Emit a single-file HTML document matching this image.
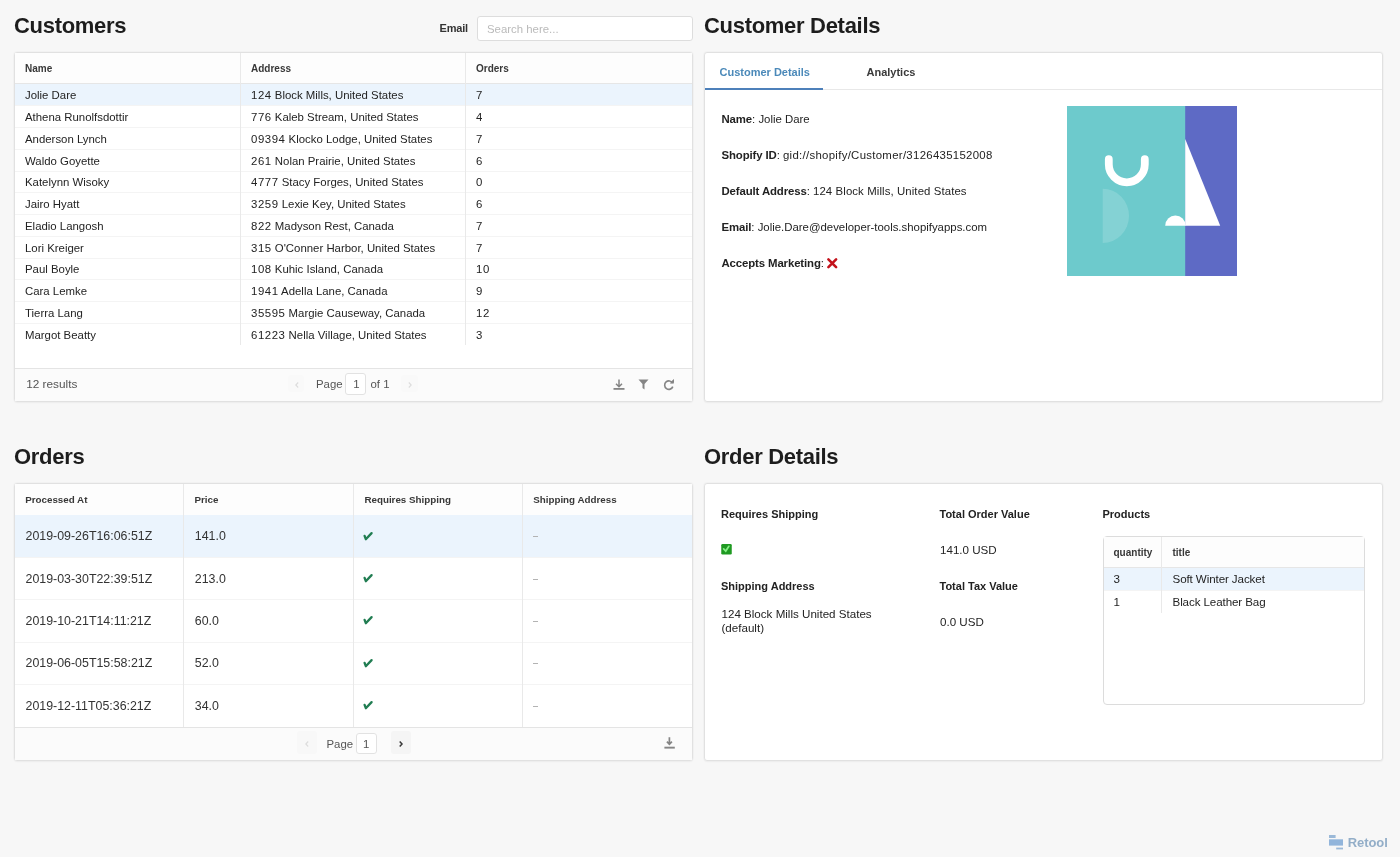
<!DOCTYPE html>
<html><head><meta charset="utf-8"><style>
*{box-sizing:border-box;margin:0;padding:0}
html,body{width:1400px;height:857px;overflow:hidden;background:#f7f7f7;font-family:"Liberation Sans",sans-serif;color:#333}
.t{position:absolute;white-space:nowrap;line-height:14px}
.r{position:absolute}
.title{position:absolute;font-size:22px;font-weight:bold;color:#1d1d1d;letter-spacing:-0.3px;line-height:28px;white-space:nowrap}
svg{position:absolute;overflow:visible}
</style></head><body>
<div id="w" style="position:absolute;left:0;top:0;width:1400px;height:857px;will-change:transform">
<div class="title" style="left:14px;top:12px">Customers</div>
<div class="t" style="left:439.5px;top:20.8px;font-size:11px;font-weight:bold;color:#333;letter-spacing:-0.2px">Email</div>
<div class="r" style="left:477px;top:16px;width:216px;height:25px;background:#fff;border:1px solid #dddddd;border-radius:3px"></div>
<div class="t" style="left:487px;top:22px;font-size:11.4px;color:#bababa;">Search here...</div>
<div class="r" style="left:14px;top:52px;width:679px;height:350px;background:#fff;border:1px solid #e1e1e1;border-radius:3px;box-shadow:0 0 0 1px rgba(0,0,0,0.018),0 1px 2px rgba(0,0,0,0.03)"></div>
<div class="r" style="left:15px;top:53px;width:677px;height:31px;background:#fdfdfd"></div>
<div class="r" style="left:15px;top:83px;width:677px;height:1px;background:#e6e6e6"></div>
<div class="t" style="left:25px;top:62px;font-size:10px;font-weight:bold;color:#383838;">Name</div>
<div class="t" style="left:251px;top:62px;font-size:10px;font-weight:bold;color:#383838;">Address</div>
<div class="t" style="left:476px;top:62px;font-size:10px;font-weight:bold;color:#383838;">Orders</div>
<div class="r" style="left:15px;top:84.0px;width:677px;height:21.75px;background:#ebf4fd"></div>
<div class="r" style="left:15px;top:105.25px;width:677px;height:1px;background:#f4f4f4"></div>
<div class="t" style="left:25px;top:88.28px;font-size:11.4px;color:#232323;">Jolie Dare</div>
<div class="t" style="left:251px;top:88.28px;font-size:11.4px;color:#232323;"><span style="letter-spacing:0.55px">124</span> Block Mills, United States</div>
<div class="t" style="left:476px;top:88.28px;font-size:11.4px;color:#232323;"><span style="letter-spacing:0.55px">7</span></div>
<div class="r" style="left:15px;top:127.0px;width:677px;height:1px;background:#f4f4f4"></div>
<div class="t" style="left:25px;top:110.03px;font-size:11.4px;color:#232323;">Athena Runolfsdottir</div>
<div class="t" style="left:251px;top:110.03px;font-size:11.4px;color:#232323;"><span style="letter-spacing:0.55px">776</span> Kaleb Stream, United States</div>
<div class="t" style="left:476px;top:110.03px;font-size:11.4px;color:#232323;"><span style="letter-spacing:0.55px">4</span></div>
<div class="r" style="left:15px;top:148.75px;width:677px;height:1px;background:#f4f4f4"></div>
<div class="t" style="left:25px;top:131.78px;font-size:11.4px;color:#232323;">Anderson Lynch</div>
<div class="t" style="left:251px;top:131.78px;font-size:11.4px;color:#232323;"><span style="letter-spacing:0.55px">09394</span> Klocko Lodge, United States</div>
<div class="t" style="left:476px;top:131.78px;font-size:11.4px;color:#232323;"><span style="letter-spacing:0.55px">7</span></div>
<div class="r" style="left:15px;top:170.5px;width:677px;height:1px;background:#f4f4f4"></div>
<div class="t" style="left:25px;top:153.53px;font-size:11.4px;color:#232323;">Waldo Goyette</div>
<div class="t" style="left:251px;top:153.53px;font-size:11.4px;color:#232323;"><span style="letter-spacing:0.55px">261</span> Nolan Prairie, United States</div>
<div class="t" style="left:476px;top:153.53px;font-size:11.4px;color:#232323;"><span style="letter-spacing:0.55px">6</span></div>
<div class="r" style="left:15px;top:192.25px;width:677px;height:1px;background:#f4f4f4"></div>
<div class="t" style="left:25px;top:175.28px;font-size:11.4px;color:#232323;">Katelynn Wisoky</div>
<div class="t" style="left:251px;top:175.28px;font-size:11.4px;color:#232323;"><span style="letter-spacing:0.55px">4777</span> Stacy Forges, United States</div>
<div class="t" style="left:476px;top:175.28px;font-size:11.4px;color:#232323;"><span style="letter-spacing:0.55px">0</span></div>
<div class="r" style="left:15px;top:214.0px;width:677px;height:1px;background:#f4f4f4"></div>
<div class="t" style="left:25px;top:197.03px;font-size:11.4px;color:#232323;">Jairo Hyatt</div>
<div class="t" style="left:251px;top:197.03px;font-size:11.4px;color:#232323;"><span style="letter-spacing:0.55px">3259</span> Lexie Key, United States</div>
<div class="t" style="left:476px;top:197.03px;font-size:11.4px;color:#232323;"><span style="letter-spacing:0.55px">6</span></div>
<div class="r" style="left:15px;top:235.75px;width:677px;height:1px;background:#f4f4f4"></div>
<div class="t" style="left:25px;top:218.78px;font-size:11.4px;color:#232323;">Eladio Langosh</div>
<div class="t" style="left:251px;top:218.78px;font-size:11.4px;color:#232323;"><span style="letter-spacing:0.55px">822</span> Madyson Rest, Canada</div>
<div class="t" style="left:476px;top:218.78px;font-size:11.4px;color:#232323;"><span style="letter-spacing:0.55px">7</span></div>
<div class="r" style="left:15px;top:257.5px;width:677px;height:1px;background:#f4f4f4"></div>
<div class="t" style="left:25px;top:240.53px;font-size:11.4px;color:#232323;">Lori Kreiger</div>
<div class="t" style="left:251px;top:240.53px;font-size:11.4px;color:#232323;"><span style="letter-spacing:0.55px">315</span> O'Conner Harbor, United States</div>
<div class="t" style="left:476px;top:240.53px;font-size:11.4px;color:#232323;"><span style="letter-spacing:0.55px">7</span></div>
<div class="r" style="left:15px;top:279.25px;width:677px;height:1px;background:#f4f4f4"></div>
<div class="t" style="left:25px;top:262.27px;font-size:11.4px;color:#232323;">Paul Boyle</div>
<div class="t" style="left:251px;top:262.27px;font-size:11.4px;color:#232323;"><span style="letter-spacing:0.55px">108</span> Kuhic Island, Canada</div>
<div class="t" style="left:476px;top:262.27px;font-size:11.4px;color:#232323;"><span style="letter-spacing:0.55px">10</span></div>
<div class="r" style="left:15px;top:301.0px;width:677px;height:1px;background:#f4f4f4"></div>
<div class="t" style="left:25px;top:284.02px;font-size:11.4px;color:#232323;">Cara Lemke</div>
<div class="t" style="left:251px;top:284.02px;font-size:11.4px;color:#232323;"><span style="letter-spacing:0.55px">1941</span> Adella Lane, Canada</div>
<div class="t" style="left:476px;top:284.02px;font-size:11.4px;color:#232323;"><span style="letter-spacing:0.55px">9</span></div>
<div class="r" style="left:15px;top:322.75px;width:677px;height:1px;background:#f4f4f4"></div>
<div class="t" style="left:25px;top:305.77px;font-size:11.4px;color:#232323;">Tierra Lang</div>
<div class="t" style="left:251px;top:305.77px;font-size:11.4px;color:#232323;"><span style="letter-spacing:0.55px">35595</span> Margie Causeway, Canada</div>
<div class="t" style="left:476px;top:305.77px;font-size:11.4px;color:#232323;"><span style="letter-spacing:0.55px">12</span></div>
<div class="t" style="left:25px;top:327.52px;font-size:11.4px;color:#232323;">Margot Beatty</div>
<div class="t" style="left:251px;top:327.52px;font-size:11.4px;color:#232323;"><span style="letter-spacing:0.55px">61223</span> Nella Village, United States</div>
<div class="t" style="left:476px;top:327.52px;font-size:11.4px;color:#232323;"><span style="letter-spacing:0.55px">3</span></div>
<div class="r" style="left:240px;top:53px;width:1px;height:292.0px;background:#e9e9e9"></div>
<div class="r" style="left:465px;top:53px;width:1px;height:292.0px;background:#e9e9e9"></div>
<div class="r" style="left:15px;top:367.5px;width:677px;height:1px;background:#e4e4e4"></div>
<div class="r" style="left:15px;top:368.5px;width:677px;height:32.5px;background:#fbfbfb"></div>
<div class="t" style="left:26.2px;top:377px;font-size:11.8px;color:#555;">12 results</div>
<div class="r" style="left:288px;top:375px;width:16px;height:17px;background:#f9f9f9;border-radius:3px"></div>
<svg style="left:294.8px;top:382px" width="4" height="6" viewBox="0 0 4 6"><path d="M3.2 0.5L0.8 3L3.2 5.5" stroke="#dcdcdc" stroke-width="1.1" fill="none"/></svg>
<div class="t" style="left:316px;top:376.6px;font-size:11.4px;color:#555;">Page</div>
<div class="r" style="left:345px;top:373.3px;width:21px;height:22px;background:#fff;border:1px solid #e2e2e2;border-radius:3px"></div>
<div class="t" style="left:353.3px;top:376.6px;font-size:11.4px;color:#555;">1</div>
<div class="t" style="left:370.5px;top:376.6px;font-size:11.4px;color:#555;">of 1</div>
<div class="r" style="left:401px;top:375px;width:17px;height:17px;background:#f9f9f9;border-radius:3px"></div>
<svg style="left:408px;top:382px" width="4" height="6" viewBox="0 0 4 6"><path d="M0.8 0.5L3.2 3L0.8 5.5" stroke="#dcdcdc" stroke-width="1.1" fill="none"/></svg>
<svg style="left:613px;top:379px" width="12" height="11" viewBox="0 0 12 11"><path d="M6 0.5V7.5M3 4.8L6 7.8L9 4.8" stroke="#858585" stroke-width="1.5" fill="none"/><rect x="0.5" y="9" width="11" height="1.8" fill="#858585"/></svg>
<svg style="left:638px;top:379px" width="11" height="11" viewBox="0 0 11 11"><path d="M0.5 0.5H10.5L6.5 5V10.5L4.5 9V5Z" fill="#858585"/></svg>
<svg style="left:663px;top:379px" width="12" height="12" viewBox="0 0 12 12"><path d="M9.6 4.2A4.2 4.2 0 1 0 9.8 7.6" stroke="#858585" stroke-width="1.6" fill="none"/><path d="M7.2 3.6H11V0" fill="#858585"/><path d="M6.8 4.6L10.8 4.6L10.8 0.6Z" fill="#858585"/></svg>
<div class="title" style="left:704px;top:12px">Customer Details</div>
<div class="r" style="left:704px;top:52px;width:679px;height:350px;background:#fff;border:1px solid #e1e1e1;border-radius:3px;box-shadow:0 0 0 1px rgba(0,0,0,0.018),0 1px 2px rgba(0,0,0,0.03)"></div>
<div class="r" style="left:705px;top:88.8px;width:677px;height:1px;background:#e8e8e8"></div>
<div class="r" style="left:705px;top:87.8px;width:118px;height:2.2px;background:#4d80ba"></div>
<div class="t" style="left:719.5px;top:64.5px;font-size:11px;font-weight:bold;color:#4b89b9;">Customer Details</div>
<div class="t" style="left:866.5px;top:64.5px;font-size:11px;font-weight:bold;color:#3a3a3a;">Analytics</div>
<div class="t" style="left:721.5px;top:111.7px;font-size:11.4px;color:#232323;"><b style="color:#222;letter-spacing:-0.12px">Name</b>: <span style="letter-spacing:0px">Jolie Dare</span></div>
<div class="t" style="left:721.5px;top:147.7px;font-size:11.4px;color:#232323;"><b style="color:#222;letter-spacing:-0.12px">Shopify ID</b>: <span style="letter-spacing:0.3px">gid://shopify/Customer/3126435152008</span></div>
<div class="t" style="left:721.5px;top:183.7px;font-size:11.4px;color:#232323;"><b style="color:#222;letter-spacing:-0.12px">Default Address</b>: <span style="letter-spacing:0.1px">124 Block Mills, United States</span></div>
<div class="t" style="left:721.5px;top:219.7px;font-size:11.4px;color:#232323;"><b style="color:#222;letter-spacing:-0.12px">Email</b>: <span style="letter-spacing:0px">Jolie.Dare@developer-tools.shopifyapps.com</span></div>
<div class="t" style="left:721.5px;top:255.7px;font-size:11.4px;color:#232323;"><b style="color:#222;letter-spacing:-0.12px">Accepts Marketing</b>:</div>
<svg style="left:826.9px;top:257.7px" width="10.5" height="10.5" viewBox="0 0 10.5 10.5"><path d="M1.4 1.4L9.1 9.1M9.1 1.4L1.4 9.1" stroke="#c3121b" stroke-width="2.6" stroke-linecap="round"/></svg>
<svg style="left:1066.5px;top:105.7px" width="170" height="170" viewBox="0 0 170 170">
<rect x="0" y="0" width="122" height="170" fill="#6dcacc"/>
<rect x="118.2" y="0" width="51.8" height="170" fill="#5e6ac5"/>
<path d="M41.8 53.2V58.3A18 18 0 0 0 77.8 58.3V53.2" stroke="#fff" stroke-width="7.8" stroke-linecap="round" fill="none"/>
<path d="M35.7 82.8A26.3 27.1 0 0 1 35.7 137Z" fill="#fff" fill-opacity="0.16"/>
<path d="M118.2 32.9L153.2 119.8H118.2Z" fill="#fff"/>
<path d="M98.2 119.8A10.2 10.2 0 0 1 118.6 119.8Z" fill="#fff"/>
</svg>
<div class="title" style="left:14px;top:443px">Orders</div>
<div class="r" style="left:14px;top:483px;width:679px;height:278px;background:#fff;border:1px solid #e1e1e1;border-radius:3px;box-shadow:0 0 0 1px rgba(0,0,0,0.018),0 1px 2px rgba(0,0,0,0.03)"></div>
<div class="r" style="left:15px;top:484px;width:677px;height:31px;background:#fdfdfd"></div>
<div class="r" style="left:15px;top:514.5px;width:677px;height:1px;background:#e6e6e6"></div>
<div class="t" style="left:25.2px;top:492.8px;font-size:9.8px;font-weight:bold;color:#383838;">Processed At</div>
<div class="t" style="left:194.5px;top:492.8px;font-size:9.8px;font-weight:bold;color:#383838;">Price</div>
<div class="t" style="left:364.4px;top:492.8px;font-size:9.8px;font-weight:bold;color:#383838;">Requires Shipping</div>
<div class="t" style="left:533.2px;top:492.8px;font-size:9.8px;font-weight:bold;color:#383838;">Shipping Address</div>
<div class="r" style="left:15px;top:515.0px;width:677px;height:42.35px;background:#ebf4fd"></div>
<div class="r" style="left:15px;top:556.85px;width:677px;height:1px;background:#f4f4f4"></div>
<div class="t" style="left:25.5px;top:529.17px;font-size:12.4px;color:#333;">2019-09-26T16:06:51Z</div>
<div class="t" style="left:194.8px;top:529.17px;font-size:12.4px;color:#333;">141.0</div>
<svg style="left:363px;top:531.57px" width="10" height="9.5" viewBox="0 0 10 9.5"><path d="M1.6 3.9L2.8 7.2L8.6 1.1" stroke="#217d52" stroke-width="2.3" stroke-linecap="round" stroke-linejoin="round" fill="none"/></svg>
<div class="r" style="left:533px;top:536.38px;width:5px;height:1px;background:#b3b3b3"></div>
<div class="r" style="left:15px;top:599.2px;width:677px;height:1px;background:#f4f4f4"></div>
<div class="t" style="left:25.5px;top:571.52px;font-size:12.4px;color:#333;">2019-03-30T22:39:51Z</div>
<div class="t" style="left:194.8px;top:571.52px;font-size:12.4px;color:#333;">213.0</div>
<svg style="left:363px;top:573.92px" width="10" height="9.5" viewBox="0 0 10 9.5"><path d="M1.6 3.9L2.8 7.2L8.6 1.1" stroke="#217d52" stroke-width="2.3" stroke-linecap="round" stroke-linejoin="round" fill="none"/></svg>
<div class="r" style="left:533px;top:578.73px;width:5px;height:1px;background:#b3b3b3"></div>
<div class="r" style="left:15px;top:641.5500000000001px;width:677px;height:1px;background:#f4f4f4"></div>
<div class="t" style="left:25.5px;top:613.88px;font-size:12.4px;color:#333;">2019-10-21T14:11:21Z</div>
<div class="t" style="left:194.8px;top:613.88px;font-size:12.4px;color:#333;">60.0</div>
<svg style="left:363px;top:616.27px" width="10" height="9.5" viewBox="0 0 10 9.5"><path d="M1.6 3.9L2.8 7.2L8.6 1.1" stroke="#217d52" stroke-width="2.3" stroke-linecap="round" stroke-linejoin="round" fill="none"/></svg>
<div class="r" style="left:533px;top:621.08px;width:5px;height:1px;background:#b3b3b3"></div>
<div class="r" style="left:15px;top:683.9px;width:677px;height:1px;background:#f4f4f4"></div>
<div class="t" style="left:25.5px;top:656.22px;font-size:12.4px;color:#333;">2019-06-05T15:58:21Z</div>
<div class="t" style="left:194.8px;top:656.22px;font-size:12.4px;color:#333;">52.0</div>
<svg style="left:363px;top:658.62px" width="10" height="9.5" viewBox="0 0 10 9.5"><path d="M1.6 3.9L2.8 7.2L8.6 1.1" stroke="#217d52" stroke-width="2.3" stroke-linecap="round" stroke-linejoin="round" fill="none"/></svg>
<div class="r" style="left:533px;top:663.42px;width:5px;height:1px;background:#b3b3b3"></div>
<div class="t" style="left:25.5px;top:698.57px;font-size:12.4px;color:#333;">2019-12-11T05:36:21Z</div>
<div class="t" style="left:194.8px;top:698.57px;font-size:12.4px;color:#333;">34.0</div>
<svg style="left:363px;top:700.97px" width="10" height="9.5" viewBox="0 0 10 9.5"><path d="M1.6 3.9L2.8 7.2L8.6 1.1" stroke="#217d52" stroke-width="2.3" stroke-linecap="round" stroke-linejoin="round" fill="none"/></svg>
<div class="r" style="left:533px;top:705.77px;width:5px;height:1px;background:#b3b3b3"></div>
<div class="r" style="left:183.3px;top:484px;width:1px;height:243px;background:#e9e9e9"></div>
<div class="r" style="left:353.2px;top:484px;width:1px;height:243px;background:#e9e9e9"></div>
<div class="r" style="left:522px;top:484px;width:1px;height:243px;background:#e9e9e9"></div>
<div class="r" style="left:15px;top:726.8px;width:677px;height:1px;background:#e4e4e4"></div>
<div class="r" style="left:15px;top:727.8px;width:677px;height:32.2px;background:#fbfbfb"></div>
<div class="r" style="left:296.5px;top:731px;width:20px;height:22.5px;background:#f8f8f8;border-radius:3px"></div>
<svg style="left:304.8px;top:740.5px" width="4" height="6" viewBox="0 0 4 6"><path d="M3.2 0.5L0.8 3L3.2 5.5" stroke="#dcdcdc" stroke-width="1.1" fill="none"/></svg>
<div class="t" style="left:326.5px;top:736.5px;font-size:11.4px;color:#555;">Page</div>
<div class="r" style="left:355.5px;top:732.5px;width:21px;height:21.5px;background:#fff;border:1px solid #e2e2e2;border-radius:3px"></div>
<div class="t" style="left:363px;top:736.5px;font-size:11.4px;color:#555;">1</div>
<div class="r" style="left:390.5px;top:731px;width:20px;height:22.5px;background:#f5f5f5;border-radius:3px"></div>
<svg style="left:399.3px;top:740.6px" width="4" height="6" viewBox="0 0 4 6"><path d="M0.7 0.6L3 3L0.7 5.4" stroke="#3a3a3a" stroke-width="1.5" fill="none"/></svg>
<svg style="left:663.5px;top:736.9px" width="11" height="12" viewBox="0 0 11 12"><path d="M5.4 0.3V7.2M2.9 4.7L5.4 7.3L7.9 4.7" stroke="#858585" stroke-width="1.7" fill="none"/><rect x="0.4" y="9.7" width="10.4" height="1.9" fill="#858585"/></svg>
<div class="title" style="left:704px;top:443px">Order Details</div>
<div class="r" style="left:704px;top:483px;width:679px;height:278px;background:#fff;border:1px solid #e1e1e1;border-radius:3px;box-shadow:0 0 0 1px rgba(0,0,0,0.018),0 1px 2px rgba(0,0,0,0.03)"></div>
<div class="t" style="left:721px;top:506.5px;font-size:11px;font-weight:bold;color:#222;">Requires Shipping</div>
<div class="t" style="left:939.5px;top:506.5px;font-size:11px;font-weight:bold;color:#222;">Total Order Value</div>
<div class="t" style="left:1102.5px;top:506.5px;font-size:11px;font-weight:bold;color:#222;">Products</div>
<svg style="left:721px;top:544px" width="11" height="10.5" viewBox="0 0 11 11"><rect x="0" y="0" width="11" height="11" rx="1.3" fill="#1f9a22"/><path d="M2.5 5.2L4.7 7.4L8 2.4" stroke="#86f086" stroke-width="1.8" fill="none" stroke-linecap="round"/></svg>
<div class="t" style="left:940px;top:543px;font-size:11.6px;color:#232323;">141.0 USD</div>
<div class="t" style="left:721px;top:578.6px;font-size:11px;font-weight:bold;color:#222;">Shipping Address</div>
<div class="t" style="left:939.5px;top:578.6px;font-size:11px;font-weight:bold;color:#222;">Total Tax Value</div>
<div class="t" style="left:721.5px;top:607.4px;font-size:11.6px;color:#232323;">124 Block Mills United States</div>
<div class="t" style="left:721.5px;top:621.4px;font-size:11.6px;color:#232323;">(default)</div>
<div class="t" style="left:940px;top:614.9px;font-size:11.6px;color:#232323;">0.0 USD</div>
<div class="r" style="left:1102.6px;top:536px;width:262px;height:169px;background:#fff;border:1px solid #dcdcdc;border-radius:4px"></div>
<div class="r" style="left:1103.6px;top:537px;width:260px;height:30px;background:#fdfdfd"></div>
<div class="r" style="left:1103.6px;top:567px;width:260px;height:1px;background:#e6e6e6"></div>
<div class="t" style="left:1113.5px;top:546px;font-size:10px;font-weight:bold;color:#383838;">quantity</div>
<div class="t" style="left:1172.5px;top:546px;font-size:10px;font-weight:bold;color:#383838;">title</div>
<div class="r" style="left:1103.6px;top:568px;width:260px;height:21.5px;background:#ebf4fd"></div>
<div class="r" style="left:1103.6px;top:589.5px;width:260px;height:1px;background:#f4f4f4"></div>
<div class="t" style="left:1113.5px;top:572px;font-size:11.6px;color:#232323;">3</div>
<div class="t" style="left:1172.5px;top:572px;font-size:11.6px;color:#232323;letter-spacing:-0.1px">Soft Winter Jacket</div>
<div class="t" style="left:1113.5px;top:594.5px;font-size:11.6px;color:#232323;">1</div>
<div class="t" style="left:1172.5px;top:594.5px;font-size:11.6px;color:#232323;letter-spacing:-0.1px">Black Leather Bag</div>
<div class="r" style="left:1161.2px;top:537px;width:1px;height:76px;background:#e9e9e9"></div>
<svg style="left:1329.1px;top:835.3px" width="15" height="15" viewBox="0 0 15 15">
<rect x="0" y="0" width="6.6" height="3" fill="#9bb9d8"/>
<rect x="0" y="4.3" width="14" height="6.3" fill="#92b5db"/>
<rect x="7.2" y="12.6" width="6.8" height="1.8" fill="#9bb9d8"/>
</svg>
<div class="t" style="left:1347.8px;top:836.3px;font-size:13px;font-weight:bold;color:#93aec8;letter-spacing:-0.1px">Retool</div>
</div></body></html>
